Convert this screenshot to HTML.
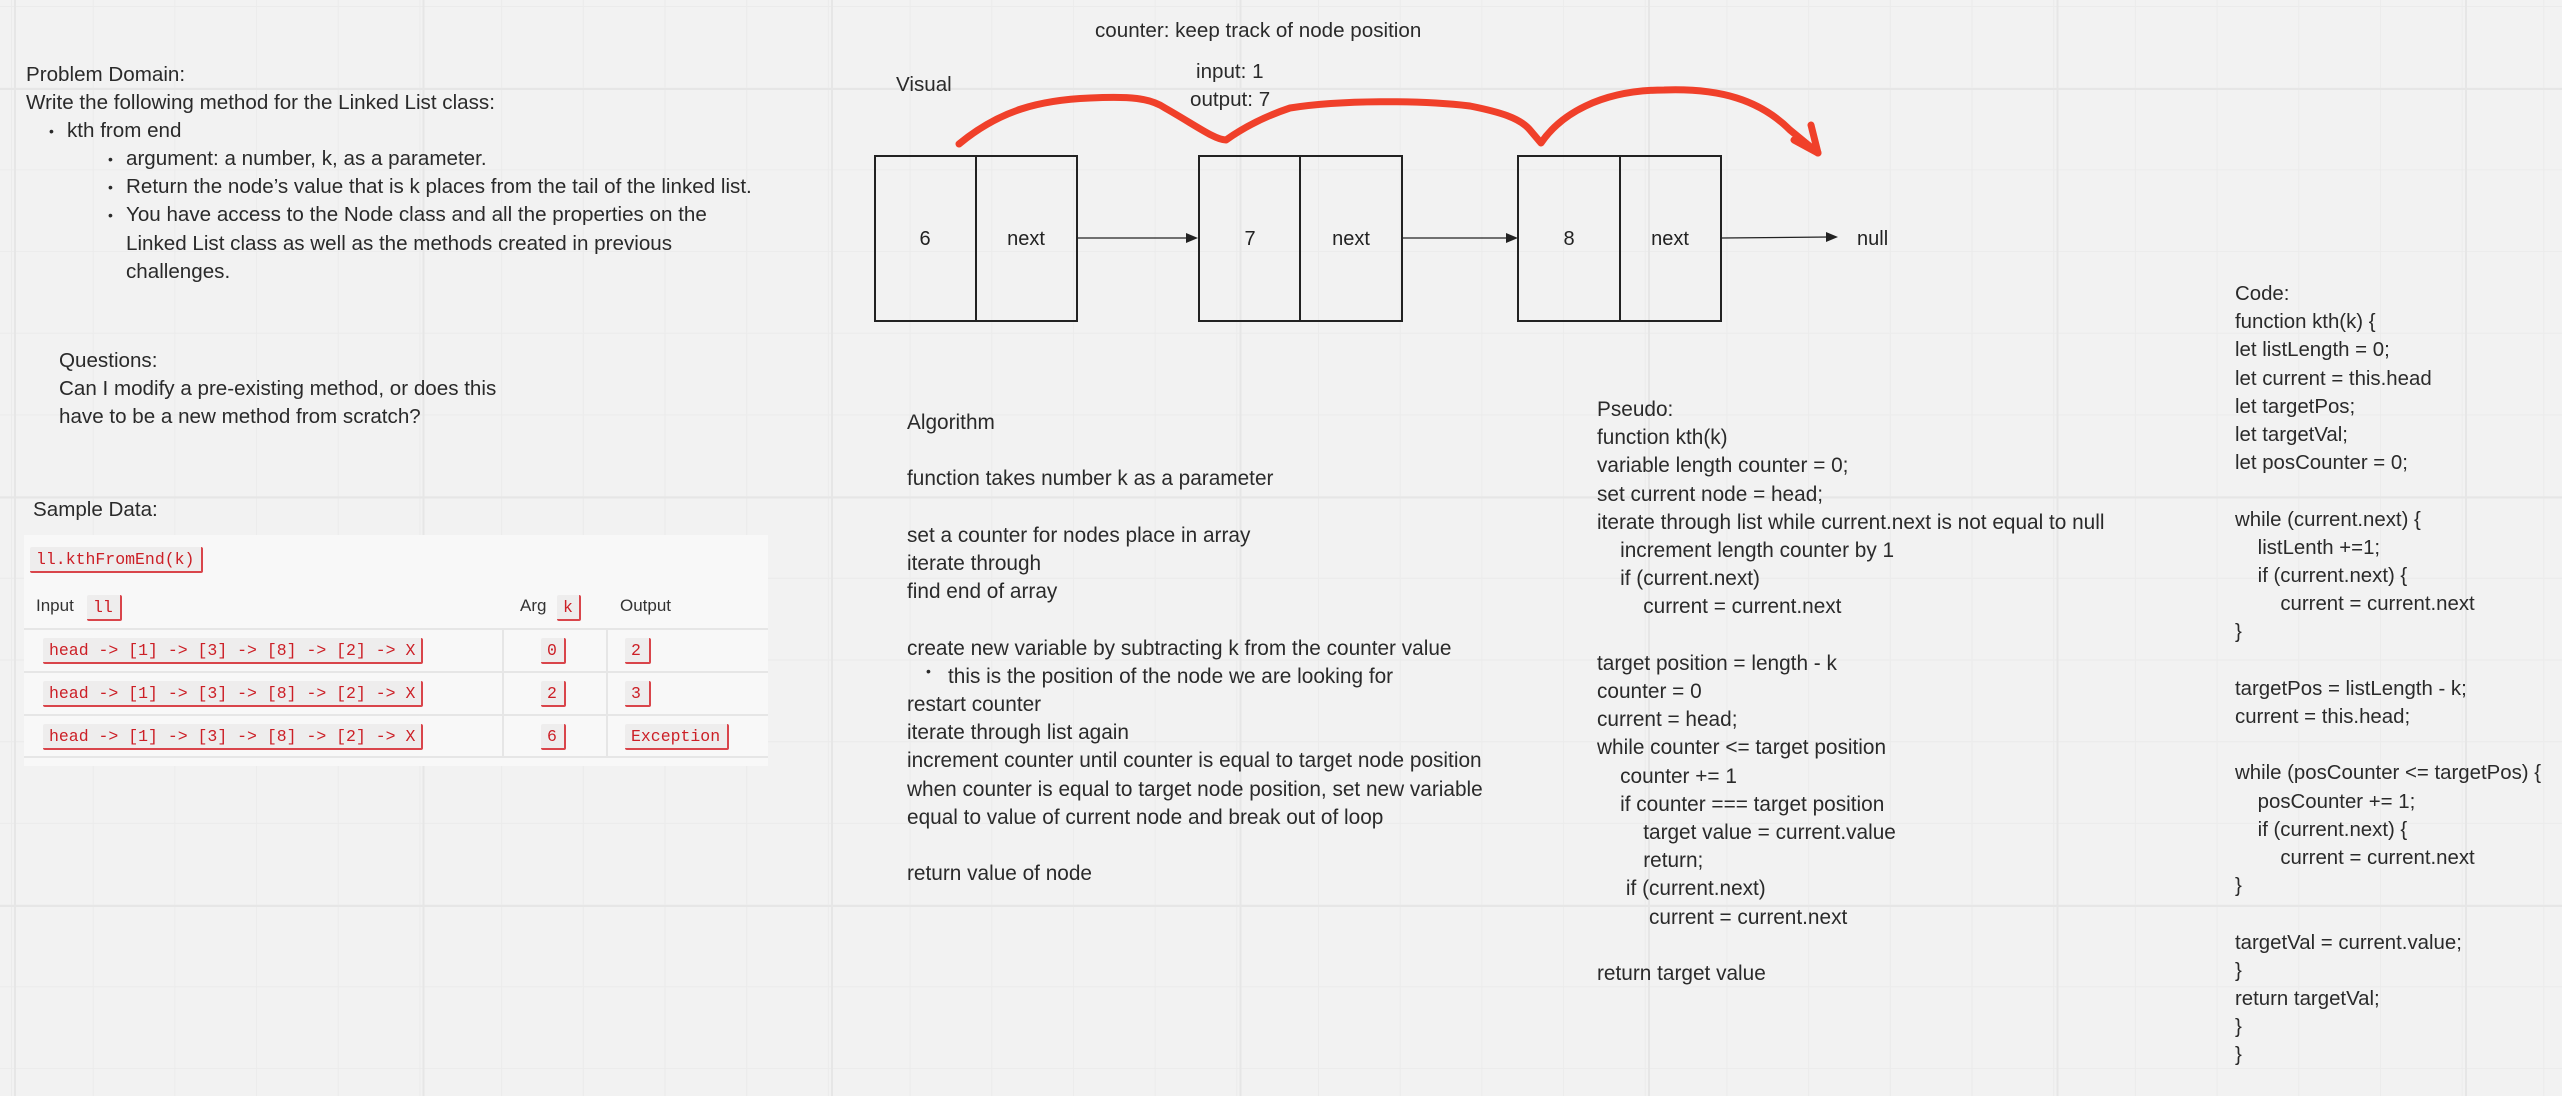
<!DOCTYPE html>
<html><head><meta charset="utf-8"><style>
html,body{margin:0;padding:0}
body{width:2562px;height:1096px;position:relative;overflow:hidden;background:#f2f2f2;font-family:"Liberation Sans",sans-serif;color:#2a2a2a;}
.grid{position:absolute;inset:0;
background-image:
linear-gradient(to right, #e6e6e6 0 2px, transparent 2px),
linear-gradient(to bottom, #e6e6e6 0 2px, transparent 2px),
linear-gradient(to right, #ebebeb 0 1px, transparent 1px),
linear-gradient(to bottom, #ebebeb 0 1px, transparent 1px);
background-size:408.5px 100%,100% 408.5px,81.7px 100%,100% 81.7px;
background-position:14px 0,0 88px,11px 0,0 6px;}
.t{position:absolute;white-space:pre;line-height:28.2px;font-size:20.6px}
.alg{font-size:20.8px}
.ps{font-size:20.8px;line-height:28.2px}
.cd{font-size:20.4px;line-height:28.2px}
.b{position:relative}
.b:before{content:"•";position:absolute;left:-18px;font-size:14px}
.panel{position:absolute;left:24px;top:535px;width:744px;height:231px;background:#f8f8f8}
.chip{position:absolute;background:#eeeded;color:#cc1f26;font-family:"Liberation Mono",monospace;font-size:16.5px;line-height:25px;padding:0 6px;border-right:2px solid #d9454b;border-bottom:2px solid #d9454b;border-radius:2px;white-space:pre;box-sizing:border-box;height:26px}
.hl{position:absolute;font-size:17px;color:#333}
.line{position:absolute;background:#e6e6e6}
</style></head><body>
<div class="grid"></div>

<div class="t" style="left:26px;top:61px">Problem Domain:
Write the following method for the Linked List class:</div>
<div class="t" style="left:67px;top:117px"><div class="b">kth from end</div></div>
<div class="t" style="left:126px;top:145px"><div class="b">argument: a number, k, as a parameter.</div><div class="b">Return the node’s value that is k places from the tail of the linked list.</div><div class="b">You have access to the Node class and all the properties on the</div><div>Linked List class as well as the methods created in previous</div><div>challenges.</div></div>

<div class="t" style="left:59px;top:347px">Questions:
Can I modify a pre-existing method, or does this
have to be a new method from scratch?</div>

<div class="t" style="left:33px;top:496px">Sample Data:</div>

<div class="panel"></div>
<div class="chip" style="left:30px;top:547px;width:173px">ll.kthFromEnd(k)</div>
<div class="hl" style="left:36px;top:596px">Input</div>
<div class="chip" style="left:87px;top:595px;width:35px">ll</div>
<div class="hl" style="left:520px;top:596px">Arg</div>
<div class="chip" style="left:557px;top:595px;width:24px">k</div>
<div class="hl" style="left:620px;top:596px">Output</div>
<div class="line" style="left:24px;top:628px;width:744px;height:2px"></div>
<div class="line" style="left:24px;top:671px;width:744px;height:2px"></div>
<div class="line" style="left:24px;top:714px;width:744px;height:2px"></div>
<div class="line" style="left:24px;top:756px;width:744px;height:2px"></div>
<div class="line" style="left:502px;top:630px;width:2px;height:127px"></div>
<div class="line" style="left:606px;top:630px;width:2px;height:127px"></div>
<div class="chip" style="left:43px;top:638px;width:380px">head -&gt; [1] -&gt; [3] -&gt; [8] -&gt; [2] -&gt; X</div>
<div class="chip" style="left:541px;top:638px;width:25px">0</div>
<div class="chip" style="left:625px;top:638px;width:26px">2</div>
<div class="chip" style="left:43px;top:681px;width:380px">head -&gt; [1] -&gt; [3] -&gt; [8] -&gt; [2] -&gt; X</div>
<div class="chip" style="left:541px;top:681px;width:25px">2</div>
<div class="chip" style="left:625px;top:681px;width:26px">3</div>
<div class="chip" style="left:43px;top:724px;width:380px">head -&gt; [1] -&gt; [3] -&gt; [8] -&gt; [2] -&gt; X</div>
<div class="chip" style="left:541px;top:724px;width:25px">6</div>
<div class="chip" style="left:625px;top:724px;width:104px">Exception</div>

<svg style="position:absolute;left:0;top:0" width="2562" height="1096">
<g fill="none" stroke="#222" stroke-width="2">
<rect x="875" y="156" width="202" height="165"/><line x1="976" y1="156" x2="976" y2="321"/>
<rect x="1199" y="156" width="203" height="165"/><line x1="1300" y1="156" x2="1300" y2="321"/>
<rect x="1518" y="156" width="203" height="165"/><line x1="1620" y1="156" x2="1620" y2="321"/>
</g>
<g stroke="#222" stroke-width="1.3">
<line x1="1078" y1="238" x2="1190" y2="238"/><line x1="1403" y1="238" x2="1510" y2="238"/><line x1="1722" y1="238" x2="1830" y2="237"/>
</g>
<g fill="#222">
<path d="M1198 238 l-12 -5 v10z"/><path d="M1518 238 l-12 -5 v10z"/><path d="M1838 237 l-12 -5 v10z"/>
</g>
<g font-family="Liberation Sans,sans-serif" font-size="20" fill="#222" text-anchor="middle">
<text x="925" y="245">6</text><text x="1026" y="245">next</text>
<text x="1250" y="245">7</text><text x="1351" y="245">next</text>
<text x="1569" y="245">8</text><text x="1670" y="245">next</text>
</g>
<text x="1857" y="245" font-family="Liberation Sans,sans-serif" font-size="20" fill="#222">null</text>
<g fill="none" stroke="#f0402a" stroke-width="7" stroke-linecap="round" stroke-linejoin="round">
<path d="M959 144 C1000 110 1040 100 1090 98 C1130 96 1150 98 1165 108 C1195 125 1215 140 1226 140 C1240 130 1260 118 1290 108 C1340 100 1420 100 1470 106 C1500 112 1520 118 1530 130 L1541 143 C1560 115 1600 90 1664 90 C1720 88 1760 100 1790 130 L1818 153"/>
<path d="M1794 140 L1818 153 L1811 125"/>
</g>
</svg>

<div class="t" style="left:896px;top:71px">Visual</div>
<div class="t" style="left:1095px;top:17px">counter: keep track of node position</div>
<div class="t" style="left:1196px;top:58px">input: 1</div>
<div class="t" style="left:1190px;top:86px">output: 7</div>

<div class="t alg" style="left:907px;top:409px">Algorithm

function takes number k as a parameter

set a counter for nodes place in array
iterate through
find end of array

create new variable by subtracting k from the counter value
<span style="padding-left:41px">this is the position of the node we are looking for</span>
restart counter
iterate through list again
increment counter until counter is equal to target node position
when counter is equal to target node position, set new variable
equal to value of current node and break out of loop

return value of node</div>
<div style="position:absolute;left:926px;top:663px;font-size:14px;color:#2a2a2a">•</div>

<div class="t ps" style="left:1597px;top:396px">Pseudo:
function kth(k)
variable length counter = 0;
set current node = head;
iterate through list while current.next is not equal to null
    increment length counter by 1
    if (current.next)
        current = current.next

target position = length - k
counter = 0
current = head;
while counter &lt;= target position
    counter += 1
    if counter === target position
        target value = current.value
        return;
     if (current.next)
         current = current.next

return target value</div>

<div class="t cd" style="left:2235px;top:280px">Code:
function kth(k) {
let listLength = 0;
let current = this.head
let targetPos;
let targetVal;
let posCounter = 0;

while (current.next) {
    listLenth +=1;
    if (current.next) {
        current = current.next
}

targetPos = listLength - k;
current = this.head;

while (posCounter &lt;= targetPos) {
    posCounter += 1;
    if (current.next) {
        current = current.next
}

targetVal = current.value;
}
return targetVal;
}
}</div>
</body></html>
